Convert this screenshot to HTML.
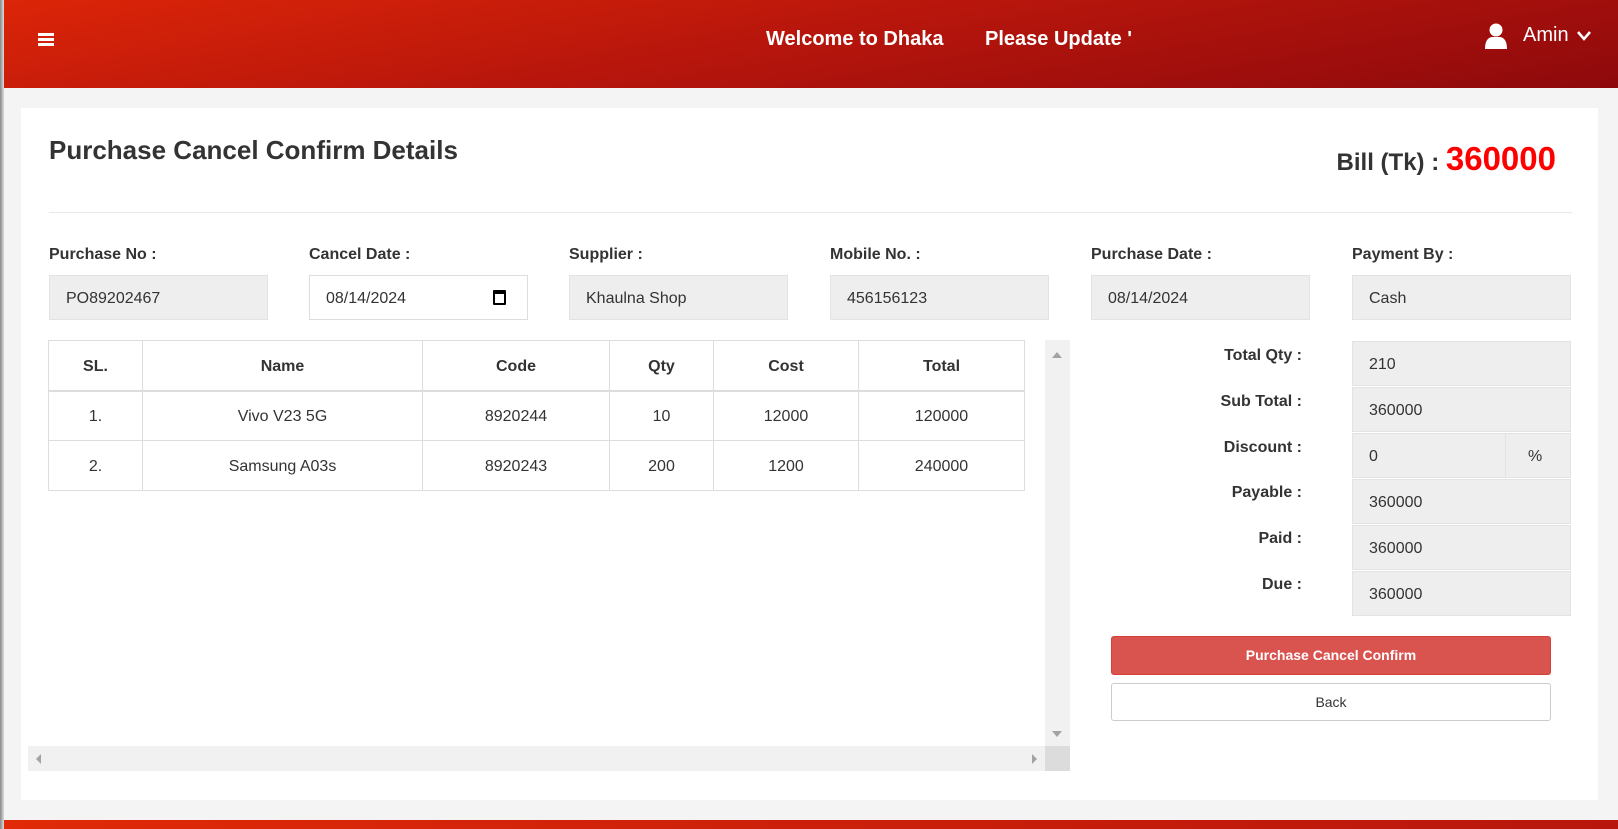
<!DOCTYPE html>
<html><head><meta charset="utf-8"><style>
*{box-sizing:border-box;margin:0;padding:0}
body{width:1618px;height:829px;overflow:hidden;background:#f4f4f4;font-family:"Liberation Sans",sans-serif;color:#333;position:relative}
.a{position:absolute}
.hdr{left:0;top:0;width:1618px;height:88px;background:linear-gradient(170deg,#dc2508 0%,#b5150c 50%,#8e090c 100%)}
.edge{left:0;top:0;width:4px;height:829px;background:linear-gradient(90deg,#888,#ddd);z-index:5}
.w{color:#fff;font-size:20px;font-weight:bold}
.card{left:21px;top:108px;width:1577px;height:692px;background:#fff}
.lbl{font-weight:bold;font-size:16px;color:#333}
.inp{height:45px;background:#eee;border:1px solid #e3e3e3;font-size:16px;padding-left:16px;line-height:45px;color:#333}
table{border-collapse:collapse;font-size:16px}
td,th{border:1px solid #ddd;text-align:center;height:50px;padding-top:3px}
th{font-weight:bold;border-bottom:2px solid #ddd}
.rl{width:200px;text-align:right;font-weight:bold;font-size:16px}
</style></head><body>
<div class="a edge"></div>
<div class="a hdr"></div>
<div class="a" style="left:38px;top:33px;width:16px;height:3px;background:#fff;box-shadow:0 5px 0 #fff,0 10px 0 #fff"></div>
<div class="a w" style="left:766px;top:28px">Welcome to Dhaka</div>
<div class="a w" style="left:985px;top:28px">Please Update '</div>
<svg class="a" style="left:1484px;top:23px" width="24" height="27" viewBox="0 0 24 27"><circle cx="12" cy="7" r="6.5" fill="#fff"/><path d="M1 26 Q1 15 8 14 L16 14 Q23 15 23 26 Z" fill="#fff"/></svg>
<div class="a w" style="left:1523px;top:24px;font-weight:normal">Amin</div>
<svg class="a" style="left:1576px;top:30px" width="16" height="12"><path d="M2 2 L8 9 L14 2" stroke="#fff" stroke-width="2.5" fill="none"/></svg>
<div class="a card"></div>
<div class="a" style="left:49px;top:135px;font-size:26px;font-weight:bold">Purchase Cancel Confirm Details</div>
<div class="a" style="right:62px;top:140px;font-size:24px;font-weight:bold">Bill (Tk) : <span style="color:#f00;font-size:33px">360000</span></div>
<div class="a" style="left:49px;top:212px;width:1523px;height:1px;background:#e8e8e8"></div>

<div class="a lbl" style="left:49px;top:246px">Purchase No :</div>
<div class="a inp" style="left:49px;top:275px;width:219px">PO89202467</div>
<div class="a lbl" style="left:309px;top:246px">Cancel Date :</div>
<div class="a inp" style="left:309px;top:275px;width:219px;background:#fff;border-color:#ddd">08/14/2024<span class="a" style="left:183px;top:14px;width:13px;height:15px;border:2px solid #000;border-top-width:4px;border-radius:1px"></span></div>
<div class="a lbl" style="left:569px;top:246px">Supplier :</div>
<div class="a inp" style="left:569px;top:275px;width:219px">Khaulna Shop</div>
<div class="a lbl" style="left:830px;top:246px">Mobile No. :</div>
<div class="a inp" style="left:830px;top:275px;width:219px">456156123</div>
<div class="a lbl" style="left:1091px;top:246px">Purchase Date :</div>
<div class="a inp" style="left:1091px;top:275px;width:219px">08/14/2024</div>
<div class="a lbl" style="left:1352px;top:246px">Payment By :</div>
<div class="a inp" style="left:1352px;top:275px;width:219px">Cash</div>

<table class="a" style="left:48px;top:340px;width:977px">
<tr><th style="width:94px">SL.</th><th style="width:280px">Name</th><th style="width:187px">Code</th><th style="width:104px">Qty</th><th style="width:145px">Cost</th><th>Total</th></tr>
<tr><td>1.</td><td>Vivo V23 5G</td><td>8920244</td><td>10</td><td>12000</td><td>120000</td></tr>
<tr><td>2.</td><td>Samsung A03s</td><td>8920243</td><td>200</td><td>1200</td><td>240000</td></tr>
</table>
<div class="a" style="left:1045px;top:340px;width:25px;height:406px;background:#f1f1f1"></div>
<div class="a" style="left:1052px;top:352px;border:5px solid transparent;border-bottom:6px solid #a3a3a3;border-top:0"></div>
<div class="a" style="left:1052px;top:731px;border:5px solid transparent;border-top:6px solid #a3a3a3;border-bottom:0"></div>
<div class="a" style="left:28px;top:746px;width:1017px;height:25px;background:#f1f1f1"></div>
<div class="a" style="left:1045px;top:746px;width:25px;height:25px;background:#dcdcdc"></div>
<div class="a" style="left:36px;top:754px;border:5px solid transparent;border-right:5px solid #a3a3a3;border-left:0"></div>
<div class="a" style="left:1032px;top:754px;border:5px solid transparent;border-left:5px solid #a3a3a3;border-right:0"></div>

<div class="a rl" style="left:1102px;top:347px">Total Qty :</div>
<div class="a inp" style="left:1352px;top:341px;width:219px">210</div>
<div class="a rl" style="left:1102px;top:393px">Sub Total :</div>
<div class="a inp" style="left:1352px;top:387px;width:219px">360000</div>
<div class="a rl" style="left:1102px;top:439px">Discount :</div>
<div class="a inp" style="left:1352px;top:433px;width:154px">0</div>
<div class="a inp" style="left:1505px;top:433px;width:66px;padding-left:22px">%</div>
<div class="a rl" style="left:1102px;top:484px">Payable :</div>
<div class="a inp" style="left:1352px;top:479px;width:219px">360000</div>
<div class="a rl" style="left:1102px;top:530px">Paid :</div>
<div class="a inp" style="left:1352px;top:525px;width:219px">360000</div>
<div class="a rl" style="left:1102px;top:576px">Due :</div>
<div class="a inp" style="left:1352px;top:571px;width:219px">360000</div>

<div class="a" style="left:1111px;top:636px;width:440px;height:39px;background:#d9534f;border:1px solid #d43f3a;border-radius:3px;color:#fff;font-size:14px;font-weight:bold;text-align:center;line-height:37px">Purchase Cancel Confirm</div>
<div class="a" style="left:1111px;top:683px;width:440px;height:38px;background:#fff;border:1px solid #ccc;border-radius:3px;color:#333;font-size:14px;text-align:center;line-height:36px">Back</div>

<div class="a" style="left:0;top:820px;width:1618px;height:9px;background:linear-gradient(90deg,#e02a08,#b8160c)"></div>
</body></html>
